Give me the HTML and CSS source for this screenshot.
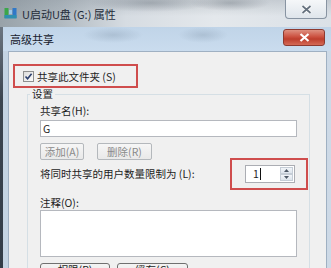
FILE: index.html
```html
<!DOCTYPE html>
<html lang="zh-CN">
<head>
<meta charset="utf-8">
<link rel="stylesheet" href="styles.css">
</head>
<body>
<div class="outer-bar">
  <svg class="app-icon" viewBox="0 0 13 13"><rect x="0.5" y="1" width="4" height="10" fill="#3aa64a"/><rect x="8.5" y="1" width="4" height="10" fill="#2f78c8"/><rect x="0.5" y="8" width="12" height="3.5" fill="#2f8fb0"/><rect x="5" y="3" width="3" height="4" fill="#9cc7e6"/></svg>
  <span class="outer-title">U启动U盘 (G:) 属性</span>
  <div class="outer-close"><svg width="11" height="9" viewBox="0 0 11 9"><path d="M1.5 1 L9.5 8 M9.5 1 L1.5 8" stroke="#fff" stroke-width="3.4"/><path d="M1.5 1 L9.5 8 M9.5 1 L1.5 8" stroke="#66727f" stroke-width="1.7"/></svg></div>
</div>
<div class="frame-row">
  <div class="edge"></div>
  <div class="dialog">
    <div class="dlg-bar">
      <span class="dlg-title">高级共享</span>
      <div class="dlg-close"><svg width="11" height="9" viewBox="0 0 11 9"><path d="M1.5 1 L9.5 8 M9.5 1 L1.5 8" stroke="#fff" stroke-width="2.2"/></svg></div>
    </div>
    <div class="dlg-body">
      <div class="share-check">
        <span class="cb"><svg width="9" height="9" viewBox="0 0 9 9"><path d="M1.5 4.5 L3.6 6.8 L7.6 1.8" fill="none" stroke="#2b3f6e" stroke-width="1.6"/></svg></span>
        <span>共享此文件夹 (S)</span>
      </div>
      <div class="group">
        <div class="group-title">设置</div>
        <div class="lbl">共享名(H):</div>
        <div class="input">G</div>
        <div class="btn-row">
          <span class="btn disabled w-add">添加(A)</span>
          <span class="btn disabled w-del">删除(R)</span>
        </div>
        <div class="limit-row">
          <span>将同时共享的用户数量限制为 (L):</span>
          <div class="spin-hl">
            <div class="spin">
              <div class="spin-val">1<span class="caret"></span></div>
              <div class="spin-btns">
                <span class="spin-btn"><svg width="5" height="3" viewBox="0 0 5 3"><path d="M0 3 L2.5 0 L5 3Z" fill="#4d5866"/></svg></span>
                <span class="spin-btn"><svg width="5" height="3" viewBox="0 0 5 3"><path d="M0 0 L2.5 3 L5 0Z" fill="#4d5866"/></svg></span>
              </div>
            </div>
          </div>
        </div>
        <div class="lbl note">注释(O):</div>
        <div class="textarea"></div>
        <div class="btn-row bottom">
          <span class="btn big w-perm">权限(P)</span>
          <span class="btn big w-cache">缓存(C)</span>
        </div>
      </div>
    </div>
  </div>
</div>
</body>
</html>
```

FILE: styles.css
```css
* { box-sizing: border-box; }

body {
  margin: 0;
  width: 331px;
  height: 268px;
  overflow: hidden;
  font-family: "Noto Sans CJK SC", "Noto Sans", sans-serif;
  font-size: 10.5px;
  color: #1d1d1d;
  background: #c5d3e0;
}

.outer-bar {
  height: 27px;
  display: flex;
  align-items: center;
  background:
    radial-gradient(ellipse 60px 9px at 150px 3px, rgba(90, 100, 110, 0.35), transparent),
    radial-gradient(ellipse 40px 8px at 230px 3px, rgba(90, 100, 110, 0.35), transparent),
    linear-gradient(180deg, rgba(120, 130, 140, 0.25), rgba(255, 255, 255, 0) 60%),
    linear-gradient(90deg, #98a2a9 0%, #b0b9c0 18%, #d6dce2 38%, #e4e8ec 65%, #dbe1e7 100%);
}

.app-icon {
  width: 13px;
  height: 13px;
  margin-left: 4px;
  margin-right: 5px;
}

.outer-title {
  font-size: 11px;
  color: #1f2b38;
}

.outer-close {
  margin-left: auto;
  margin-right: 4px;
  align-self: flex-start;
  width: 42px;
  height: 19px;
  border: 1px solid #8894a2;
  border-top: none;
  border-radius: 0 0 4px 4px;
  background: linear-gradient(180deg, #f5f7f9, #dfe5eb);
  display: flex;
  align-items: center;
  justify-content: center;
}

.frame-row {
  display: flex;
  height: 241px;
}

.edge {
  width: 3px;
  background: linear-gradient(180deg, #6b7580, #3b4550 30%, #333d48);
}

.dialog {
  flex: 1;
  display: flex;
  flex-direction: column;
  background: linear-gradient(90deg, #c4d4e3, #cdd9e6);
  border-top-left-radius: 4px;
}

.dlg-bar {
  height: 24px;
  flex: none;
  display: flex;
  align-items: center;
  background:
    radial-gradient(ellipse 30px 8px at 110px 8px, rgba(120, 140, 160, 0.3), transparent),
    radial-gradient(ellipse 25px 8px at 200px 8px, rgba(120, 140, 160, 0.3), transparent),
    linear-gradient(180deg, #c0d4e8, #cadcee);
}

.dlg-title {
  padding-left: 7px;
  font-size: 11px;
  color: #16202c;
}

.dlg-close {
  margin-left: auto;
  margin-right: 6px;
  align-self: flex-start;
  margin-top: 2px;
  width: 42px;
  height: 17px;
  border: 1px solid #8d3a30;
  border-radius: 3px;
  background: linear-gradient(180deg, #de9080 0%, #cc5140 45%, #bd3e2d 60%, #d46a56 100%);
  display: flex;
  align-items: center;
  justify-content: center;
}

.dlg-body {
  flex: 1;
  margin: 0 4px 0 5px;
  background: #f0f0f0;
  border: 1px solid #9fb0c2;
  border-bottom: none;
}

.share-check {
  margin: 12px 0 0 4px;
  width: 125px;
  height: 24px;
  border: 2px solid #cf4d4d;
  display: flex;
  align-items: center;
  padding-left: 8px;
}

.cb {
  width: 11px;
  height: 11px;
  margin-right: 3px;
  border: 1px solid #8e8f8f;
  background: linear-gradient(135deg, #dcdcdc, #fbfbfb);
  display: flex;
  align-items: center;
  justify-content: center;
}

.group {
  margin: 6px 16px 0 18px;
  height: 200px;
  border: 1px solid #d5dfe5;
  border-bottom: none;
  padding: 0 12px;
}

.group-title {
  margin: -7px 0 0 -10px;
  padding: 0 2px;
  width: max-content;
  background: #f0f0f0;
  line-height: 12px;
}

.lbl {
  line-height: 14px;
  margin-top: 4px;
}

.lbl.note {
  margin-top: 13px;
}

.input {
  height: 17px;
  margin-top: 2px;
  border: 1px solid #b5b8be;
  background: #fff;
  padding-left: 2px;
  line-height: 15px;
}

.btn-row {
  display: flex;
  gap: 13px;
  margin-top: 6px;
}

.btn-row.bottom {
  gap: 7px;
}

.btn {
  height: 17px;
  border: 1px solid #b4b8bc;
  border-radius: 2px;
  display: flex;
  align-items: center;
  justify-content: center;
  background: linear-gradient(180deg, #f6f6f6, #e9e9e9);
}

.btn.disabled {
  color: #8a8a8a;
}

.btn.big {
  height: 24px;
  align-items: flex-start;
  padding-top: 0;
  line-height: 12px;
  border-color: #707070;
  border-radius: 3px;
  background: linear-gradient(180deg, #f3f3f3, #e2e2e2);
}

.w-add { width: 44px; }
.w-del { width: 55px; }
.w-perm { width: 70px; }
.w-cache { width: 71px; }

.limit-row {
  display: flex;
  align-items: center;
  margin-top: 5px;
  line-height: 14px;
}

.spin-hl {
  margin: -7px -11px -7px auto;
  border: 2px solid #cf4d4d;
  padding: 5px 11px 5px 13px;
}

.spin {
  width: 50px;
  height: 18px;
  border: 1px solid #abadb3;
  background: #fff;
  display: flex;
}

.spin-val {
  flex: 1;
  padding-left: 7px;
  line-height: 16px;
  display: flex;
  align-items: center;
}

.caret {
  width: 1px;
  height: 12px;
  margin-left: 1px;
  background: #111;
}

.spin-btns {
  width: 13px;
  margin: 1px;
  display: flex;
  flex-direction: column;
}

.spin-btn {
  flex: 1;
  display: flex;
  align-items: center;
  justify-content: center;
  background: linear-gradient(180deg, #f2f5f9, #dde4ec);
  border: 1px solid #c5cdd6;
}

.textarea {
  height: 47px;
  border: 1px solid #b5b8be;
  background: #fff;
}
```
